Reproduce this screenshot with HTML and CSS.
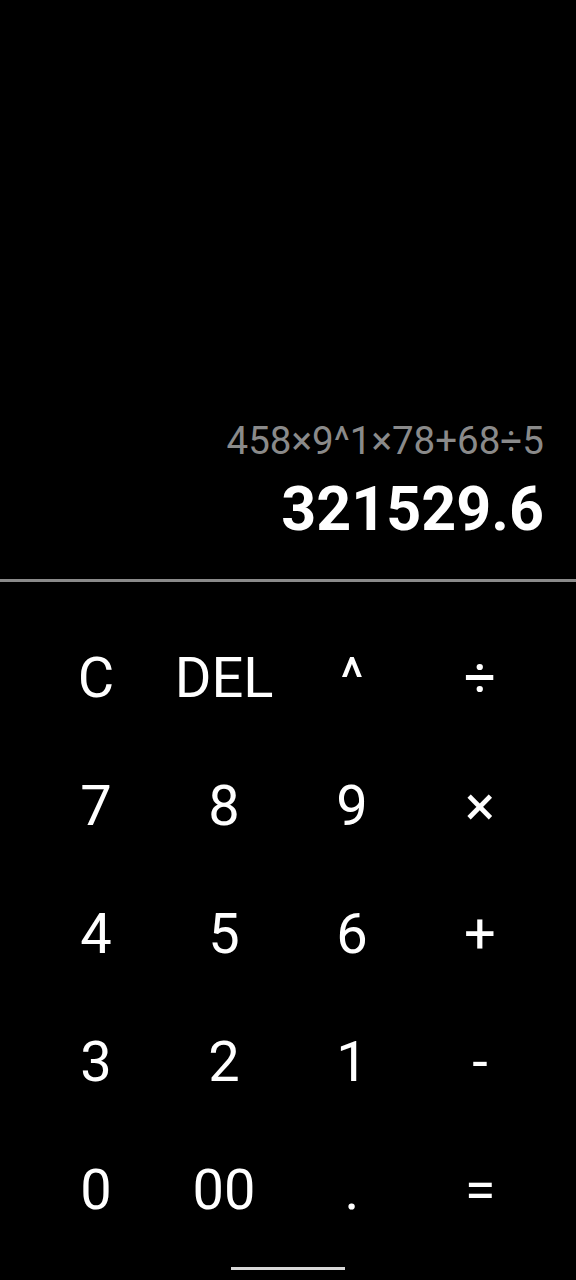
FILE: index.html
```html
<!DOCTYPE html>
<html lang="en">
<head>
<meta charset="utf-8">
<title>Calculator</title>
<link rel="stylesheet" href="styles.css">
</head>
<body>
<div class="app">
  <section class="display">
    <div class="expression">458×9^1×78+68÷5</div>
    <div class="result">321529.6</div>
  </section>
  <div class="divider"></div>
  <section class="keypad">
    <button class="key">C</button>
    <button class="key">DEL</button>
    <button class="key">^</button>
    <button class="key">÷</button>
    <button class="key">7</button>
    <button class="key">8</button>
    <button class="key">9</button>
    <button class="key">×</button>
    <button class="key">4</button>
    <button class="key">5</button>
    <button class="key">6</button>
    <button class="key">+</button>
    <button class="key">3</button>
    <button class="key">2</button>
    <button class="key">1</button>
    <button class="key">-</button>
    <button class="key">0</button>
    <button class="key">00</button>
    <button class="key">.</button>
    <button class="key">=</button>
  </section>
  <div class="nav-handle"></div>
</div>
</body>
</html>
```
FILE: styles.css
```css
html, body {
  margin: 0;
  padding: 0;
  background: #000;
}
body {
  font-family: Roboto, "Liberation Sans", sans-serif;
  color: #fff;
}
.app {
  width: 576px;
  height: 1280px;
  display: flex;
  flex-direction: column;
  overflow: hidden;
}
.display {
  height: 579px;
  box-sizing: border-box;
  display: flex;
  flex-direction: column;
  justify-content: flex-end;
  align-items: flex-end;
  padding: 0 32px 34px 32px;
}
.expression {
  font-size: 38.5px;
  line-height: 48px;
  color: #8a8a8a;
  margin-bottom: 8px;
}
.result {
  font-size: 61px;
  line-height: 72px;
  font-weight: 700;
  color: #fff;
}
.divider {
  height: 3px;
  background: #8a8a8a;
}
.keypad {
  display: grid;
  grid-template-columns: repeat(4, 128px);
  grid-auto-rows: 128px;
  padding: 32px 32px 0 32px;
}
.key {
  background: none;
  border: none;
  padding: 0;
  margin: 0;
  color: #fff;
  font-family: Roboto, "Liberation Sans", sans-serif;
  font-size: 56px;
  line-height: 128px;
  font-weight: 400;
  text-align: center;
}
.nav-handle {
  width: 114px;
  height: 3px;
  background: #d8d8d8;
  margin: 13px auto 0 auto;
}
```
